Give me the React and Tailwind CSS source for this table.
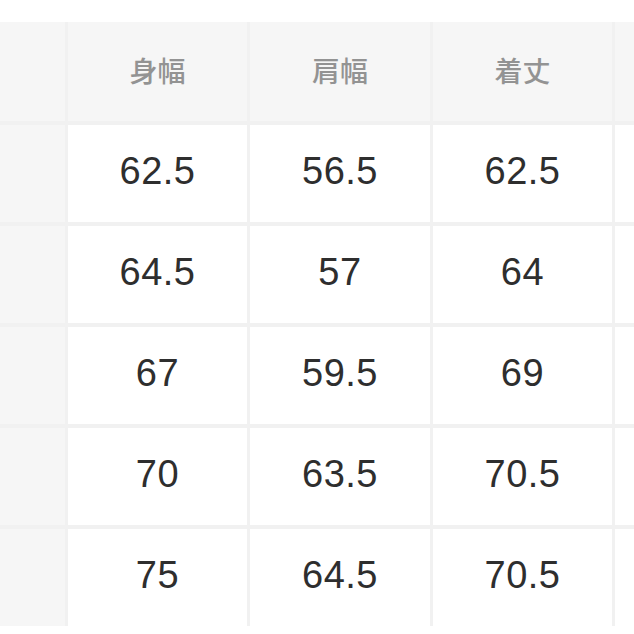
import { Fragment } from "react";

export default function App() {
  const headers = ["身幅", "肩幅", "着丈"];
  const rows = [
    ["62.5", "56.5", "62.5"],
    ["64.5", "57", "64"],
    ["67", "59.5", "69"],
    ["70", "63.5", "70.5"],
    ["75", "64.5", "70.5"],
  ];
  return (
    <div className="w-[634px] h-[634px] bg-white pt-[22px] overflow-hidden">
      <div
        className="grid grid-cols-[65px_179px_180px_179px_40px] grid-rows-[99px_repeat(5,97px)] gap-x-[3px] gap-y-[4px] bg-[#f1f1f1] w-[700px]"
        style={{ fontFamily: '"Liberation Sans", Arial, sans-serif' }}
      >
        <div className="bg-[#f6f6f6]" />
        {headers.map((h) => (
          <div
            key={h}
            className="bg-[#f6f6f6] flex items-center justify-center text-[28px] font-medium text-[#939393]"
            style={{ fontFamily: '"Noto Sans CJK JP", "Noto Sans", sans-serif' }}
          >
            <span className="relative -top-[2px]">{h}</span>
          </div>
        ))}
        <div className="bg-[#f6f6f6]" />
        {rows.map((r, i) => (
          <Fragment key={i}>
            <div className="bg-[#f6f6f6]" />
            {r.map((v, j) => (
              <div
                key={j}
                className="bg-white flex items-center justify-center text-[38px] text-[#2e2e2e] tracking-[0.5px]"
              >
                <span className="relative -top-[2px]">{v}</span>
              </div>
            ))}
            <div className="bg-white" />
          </Fragment>
        ))}
      </div>
    </div>
  );
}
